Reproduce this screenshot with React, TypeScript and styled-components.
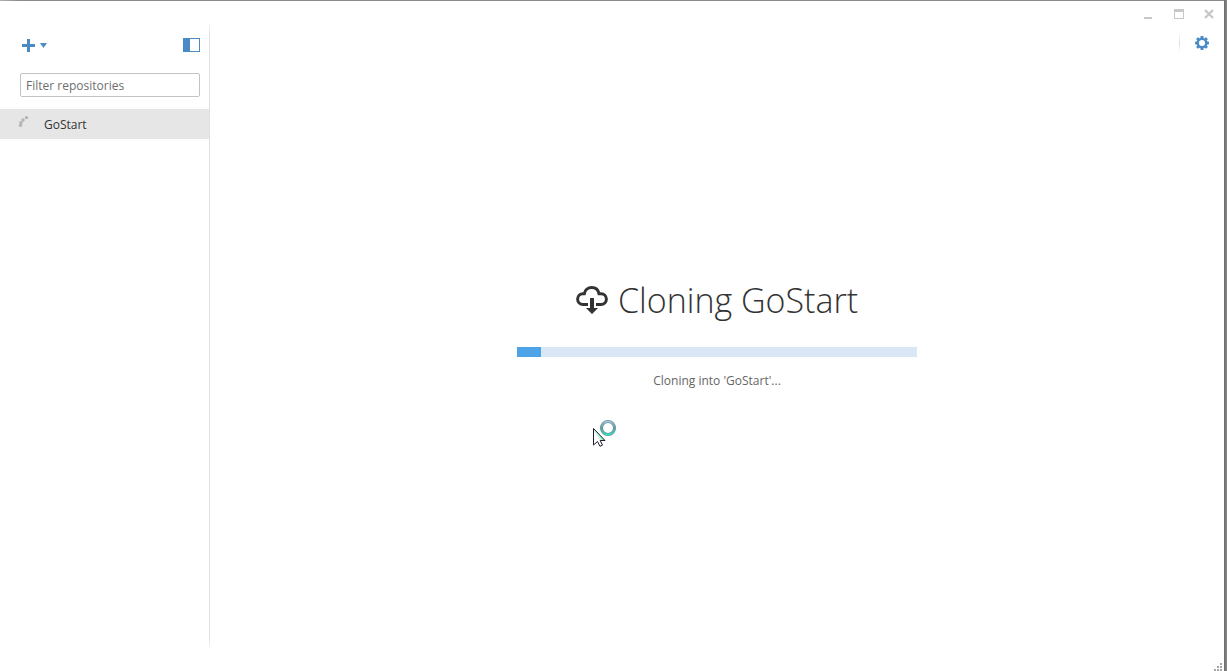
import React from "react";
import styled, { createGlobalStyle } from "styled-components";

const GlobalStyle = createGlobalStyle`
  *, *::before, *::after { box-sizing: border-box; }
  body {
    margin: 0;
    background: #6f6f6f;
    font-family: "Open Sans", "Noto Sans", sans-serif;
    font-size: 12px;
    line-height: 18px;
    color: #333;
  }
  button { font: inherit; }
`;

const blue = "#4a8bc6";

const Desktop = styled.div`
  min-height: 100vh;
  display: flex;
  padding: 1px 3px 0 0;
  background: linear-gradient(to right, #b0b0b0, #8a8a8a 20px, #8a8a8a calc(100% - 3px), #6a6a6a calc(100% - 3px), #8c8c8c);
`;

const AppWindow = styled.div`
  position: relative;
  flex: 1;
  display: flex;
  flex-direction: column;
  background: #fff;
`;

const TitleBar = styled.header`
  display: flex;
  justify-content: flex-end;
  gap: 10px;
  height: 24px;
  padding: 3px 5px 0 0;
`;

const IconButton = styled.button<{ $width: number }>`
  display: flex;
  align-items: center;
  justify-content: center;
  width: ${(p) => p.$width}px;
  height: 20px;
  padding: 0;
  border: 0;
  background: transparent;
  color: ${blue};
`;

const WindowButton = styled(IconButton)`
  color: #c8c8c8;
`;

const Body = styled.div`
  flex: 1;
  display: flex;
`;

const Sidebar = styled.aside`
  flex: none;
  width: 209px;
`;

const SidebarRule = styled.div`
  flex: none;
  width: 1px;
  margin: -4px 0 20px;
  background: linear-gradient(transparent, #e0e0e0 12px, #e0e0e0 calc(100% - 12px), transparent);
`;

const SidebarTools = styled.div`
  display: flex;
  justify-content: space-between;
  padding: 10px 9px 0 20px;
`;

const FilterField = styled.div`
  padding: 18px 9px 12px 20px;
`;

const FilterInput = styled.input`
  display: block;
  width: 100%;
  height: 24px;
  padding: 0 5px;
  border: 1px solid #c3c3c3;
  border-radius: 2px;
  background: #fff;
  font: inherit;
  color: #333;
  &::placeholder { color: #6e6e6e; opacity: 1; }
`;

const RepoList = styled.ul`
  margin: 0;
  padding: 0;
  list-style: none;
`;

const RepoRow = styled.li`
  display: flex;
  align-items: center;
  gap: 12px;
  height: 30px;
  padding-left: 16px;
  background: #e6e6e6;
  line-height: 20px;
`;

const RepoName = styled.span`
  padding-top: 2px;
`;

const Main = styled.main`
  flex: 1;
  display: flex;
  flex-direction: column;
`;

const MainTools = styled.div`
  display: flex;
  justify-content: flex-end;
  align-items: center;
  gap: 12px;
  height: 36px;
  padding-right: 12px;
`;

const ToolRule = styled.div`
  width: 1px;
  height: 20px;
  background: linear-gradient(transparent, #dcdcdc, transparent);
`;

const Stage = styled.section`
  flex: 1;
  display: flex;
  align-items: center;
  justify-content: center;
  padding-bottom: 66px;
`;

const CloneStatus = styled.div`
  position: relative;
  width: 400px;
  display: flex;
  flex-direction: column;
  align-items: center;
`;

const Heading = styled.h1`
  display: flex;
  align-items: center;
  gap: 10px;
  margin: 0 0 23px;
  font-size: 34px;
  font-weight: 300;
  line-height: 48px;
  white-space: nowrap;
`;

const ProgressTrack = styled.div`
  width: 100%;
  height: 10px;
  margin-bottom: 15px;
  background: #d9e6f3;
`;

const ProgressFill = styled.div`
  height: 100%;
  background: #4da3e8;
`;

const StatusText = styled.p`
  margin: 0;
  color: #666;
`;

const BusyPointer = styled.svg`
  position: absolute;
  left: 75px;
  top: 142px;
`;

const ResizeGrip = styled.svg`
  position: absolute;
  right: 1px;
  bottom: 0;
`;

const PlusCaretIcon = () => (
  <svg width="28" height="20" viewBox="0 0 28 20" fill="currentColor" aria-hidden="true">
    <path d="M7 4h3v5h5v3h-5v5H7v-5H2V9h5z" />
    <path d="M20 8h7l-3.500 5z" />
  </svg>
);

const PanelIcon = () => (
  <svg width="17" height="14" viewBox="0 0 17 14" aria-hidden="true">
    <rect x=".5" y=".5" width="16" height="13" fill="#fff" stroke="currentColor" />
    <rect width="7" height="14" fill="currentColor" />
  </svg>
);

const GearIcon = () => (
  <svg width="14" height="14" viewBox="0 0 14 14" aria-hidden="true">
    <circle cx="7" cy="7" r="4.200" fill="none" stroke="currentColor" strokeWidth="2.300" />
    {[0, 45, 90, 135, 180, 225, 270, 315].map((a) => (
      <path key={a} d="M5.700 0h2.600l.4 2.300H5.300z" fill="currentColor" transform={`rotate(${a} 7 7)`} />
    ))}
  </svg>
);

const SpinnerIcon = () => (
  <svg width="16" height="20" viewBox="0 0 16 20" fill="#b4b4b4" aria-hidden="true">
    <circle cx="4.500" cy="11.300" r="1.700" />
    <circle cx="5" cy="8.600" r="1.700" />
    <circle cx="7" cy="6" r="1.700" />
    <circle cx="10.500" cy="3.600" r="1.700" />
  </svg>
);

const CloudDownloadIcon = () => (
  <svg width="32" height="28" viewBox="0 0 32 28" aria-hidden="true">
    <path
      d="M12 18.500H7A5.400 5.400 0 0 1 7 7.700H8.300C9 4 12 1.500 15.700 1.500C19.500 1.500 22.300 4 23 7.700H25A5.400 5.400 0 0 1 25 18.500H20"
      fill="none"
      stroke="#333"
      strokeWidth="3"
    />
    <path d="M14 12h4v10h4l-6 6-6-6h4z" fill="#333" />
  </svg>
);

export default function App() {
  const progress = 6;
  return (
    <>
      <GlobalStyle />
      <Desktop>
        <AppWindow>
          <TitleBar>
            <WindowButton $width={20} aria-label="Minimize">
              <svg width="10" height="10" aria-hidden="true">
                <path d="M0 8h8v2H0z" fill="currentColor" />
              </svg>
            </WindowButton>
            <WindowButton $width={20} aria-label="Maximize">
              <svg width="10" height="10" aria-hidden="true">
                <path d="M0 0h10v10H0zM1 3v6h8V3z" fill="currentColor" fillRule="evenodd" />
              </svg>
            </WindowButton>
            <WindowButton $width={20} aria-label="Close">
              <svg width="10" height="10" aria-hidden="true">
                <path d="M1 1l8 8M9 1L1 9" stroke="currentColor" strokeWidth="2.400" />
              </svg>
            </WindowButton>
          </TitleBar>
          <Body>
            <Sidebar>
              <SidebarTools>
                <IconButton $width={28} aria-label="Add repository">
                  <PlusCaretIcon />
                </IconButton>
                <IconButton $width={17} aria-label="Toggle sidebar">
                  <PanelIcon />
                </IconButton>
              </SidebarTools>
              <FilterField>
                <FilterInput type="text" placeholder="Filter repositories" aria-label="Filter repositories" />
              </FilterField>
              <RepoList>
                <RepoRow>
                  <SpinnerIcon />
                  <RepoName>GoStart</RepoName>
                </RepoRow>
              </RepoList>
            </Sidebar>
            <SidebarRule />
            <Main>
              <MainTools>
                <ToolRule />
                <IconButton $width={20} aria-label="Settings">
                  <GearIcon />
                </IconButton>
              </MainTools>
              <Stage>
                <CloneStatus>
                  <Heading>
                    <CloudDownloadIcon />
                    Cloning GoStart
                  </Heading>
                  <ProgressTrack role="progressbar" aria-label="Clone progress" aria-valuenow={progress}>
                    <ProgressFill style={{ width: `${progress}%` }} />
                  </ProgressTrack>
                  <StatusText>Cloning into 'GoStart'...</StatusText>
                  <BusyPointer width="26" height="30" viewBox="0 0 26 30" aria-hidden="true">
                    <defs>
                      <linearGradient id="ring" x1="0" y1="0" x2="0" y2="1">
                        <stop offset="0" stopColor="#9cc0d8" />
                        <stop offset=".5" stopColor="#5b9c9c" />
                        <stop offset="1" stopColor="#35dcc0" />
                      </linearGradient>
                      <linearGradient id="arrow" x1="1" y1="0" x2="0" y2="1">
                        <stop offset=".3" stopColor="#5fe0a8" />
                        <stop offset=".6" stopColor="#fff" />
                      </linearGradient>
                    </defs>
                    <path
                      d="M1.500 10.500v16.500l4-3.500 2.500 4.800 2.500-1.200-2.300-4.600h4.800z"
                      fill="url(#arrow)"
                      stroke="#1c1c2c"
                    />
                    <circle cx="16" cy="10" r="6.500" fill="#fff" stroke="#6f8f9c" strokeWidth="3" />
                    <circle cx="16" cy="10" r="6.500" fill="none" stroke="url(#ring)" strokeWidth="2" />
                  </BusyPointer>
                </CloneStatus>
              </Stage>
            </Main>
          </Body>
          <ResizeGrip width="9" height="8" fill="#a6a6a6" aria-hidden="true">
            <path d="M6 0h2v2H6zM3 3h2v2H3zM6 3h2v2H6zM0 6h2v2H0zM3 6h2v2H3zM6 6h2v2H6z" />
          </ResizeGrip>
        </AppWindow>
      </Desktop>
    </>
  );
}
